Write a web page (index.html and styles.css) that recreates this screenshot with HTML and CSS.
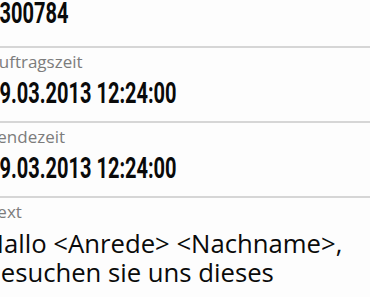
FILE: index.html
```html
<!DOCTYPE html>
<html lang="de">
<head>
<meta charset="utf-8">
<link rel="stylesheet" href="styles.css">
</head>
<body>
<div class="list">
  <div class="row first">
    <div class="value">1300784</div>
  </div>
  <div class="row">
    <div class="label">Auftragszeit</div>
    <div class="value">19.03.2013 12:24:00</div>
  </div>
  <div class="row">
    <div class="label">Sendezeit</div>
    <div class="value">19.03.2013 12:24:00</div>
  </div>
  <div class="row last">
    <div class="label">Text</div>
    <div class="text">Hallo &lt;Anrede&gt; &lt;Nachname&gt;,<br>besuchen sie uns dieses</div>
  </div>
</div>
</body>
</html>
```
FILE: styles.css
```css
html, body {
  margin: 0;
  padding: 0;
  background: #fdfdfd;
  overflow: hidden;
}
.list {
  width: 370px;
  height: 297px;
  overflow: hidden;
}
.row {
  display: flex;
  flex-direction: column;
  padding: 4px 0 8px 0;
  border-bottom: 2px solid #d6d6d6;
  height: 61px;
}
.row.first {
  margin-top: -27px;
  padding-top: 24px;
  height: 41px;
}
.row.last {
  border-bottom: none;
  height: auto;
}
.label {
  font-family: "Open Sans", sans-serif;
  font-size: 17px;
  line-height: 20px;
  color: #7c7c7c;
  margin-left: -12px;
  white-space: nowrap;
}
.value {
  font-family: Roboto, "DejaVu Sans Condensed", sans-serif;
  font-weight: bold;
  font-size: 29px;
  line-height: 30px;
  color: #0a0a0a;
  margin-left: -12px;
  margin-top: 6px;
  white-space: nowrap;
  transform: scaleX(0.69);
  transform-origin: 0 50%;
}
.row.first .value {
  margin-top: 1px;
}
.text {
  font-family: "Open Sans", sans-serif;
  font-size: 25.7px;
  line-height: 29px;
  color: #0a0a0a;
  margin-left: -15px;
  margin-top: 7px;
  white-space: nowrap;
}
```
